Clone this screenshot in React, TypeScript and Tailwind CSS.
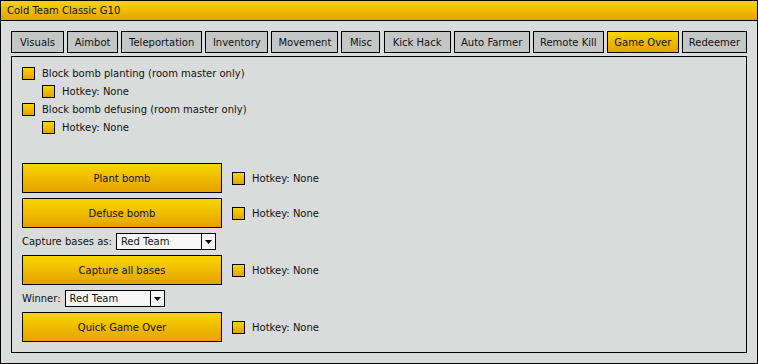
import { useState } from "react";

const tabs = [
  { label: "Visuals", w: "w-[53px]" },
  { label: "Aimbot", w: "w-[51px]" },
  { label: "Teleportation", w: "w-[81px]" },
  { label: "Inventory", w: "w-[63px]" },
  { label: "Movement", w: "w-[67px]" },
  { label: "Misc", w: "w-[39px]" },
  { label: "Kick Hack", w: "w-[67px]" },
  { label: "Auto Farmer", w: "w-[76px]" },
  { label: "Remote Kill", w: "w-[71px]" },
  { label: "Game Over", w: "w-[72px]" },
  { label: "Redeemer", w: "w-[65px]" },
];

const yellow = "bg-gradient-to-b from-[#f8d600] to-[#e5a200]";

// 노란 체크박스 + 라벨
const Check = ({ label }: { label: string }) => (
  <div className="flex items-center gap-[7px] h-[13px] leading-[13px]">
    <div className={`w-[13px] h-[13px] border border-black ${yellow}`} />
    <span>{label}</span>
  </div>
);

const ActionRow = ({ label }: { label: string }) => (
  <div className="flex items-center gap-[10px]">
    <button className={`w-[200px] h-[30px] border border-black ${yellow} text-[10px]`}>
      {label}
    </button>
    <Check label="Hotkey: None" />
  </div>
);

const Select = ({ label, value }: { label: string; value: string }) => (
  <div className="flex items-center gap-[4px] h-[17px]">
    <span>{label}</span>
    <div className="w-[100px] h-[17px] border border-black bg-[#f6f6f6] flex">
      <span className="flex-1 pl-[4px] leading-[15px]">{value}</span>
      <div className="w-[14px] border-l border-black flex items-center justify-center">
        <svg width="7" height="4" viewBox="0 0 7 4">
          <path d="M0 0h7L3.5 4z" fill="#000" />
        </svg>
      </div>
    </div>
  </div>
);

export default function App() {
  const [active, setActive] = useState("Game Over");

  return (
    <div
      className="w-[758px] h-[364px] border border-black bg-[#dadcdb] flex flex-col text-[10px] text-[#111]"
      style={{ fontFamily: '"DejaVu Sans", Verdana, sans-serif' }}
    >
      {/* 타이틀 바 */}
      <div className={`h-[20px] border-b border-black ${yellow} flex items-center pl-[6px] shrink-0`}>
        Cold Team Classic G10
      </div>

      <div className="flex-1 flex flex-col px-[10px] pt-[10px] pb-[10px]">
        {/* 탭 */}
        <div className="flex justify-between">
          {tabs.map((t) => (
            <button
              key={t.label}
              onClick={() => setActive(t.label)}
              className={`${t.w} h-[22px] border border-black flex items-center justify-center ${
                active === t.label ? yellow : "bg-[#c5c7c6]"
              }`}
            >
              {t.label}
            </button>
          ))}
        </div>

        {/* 패널 */}
        <div className="flex-1 mt-[3px] border border-black px-[10px] pt-[10px]">
          <div className="flex flex-col gap-[5px]">
            <Check label="Block bomb planting (room master only)" />
            <div className="ml-[20px]">
              <Check label="Hotkey: None" />
            </div>
            <Check label="Block bomb defusing (room master only)" />
            <div className="ml-[20px]">
              <Check label="Hotkey: None" />
            </div>
          </div>

          <div className="flex flex-col gap-[5px] mt-[29px]">
            <ActionRow label="Plant bomb" />
            <ActionRow label="Defuse bomb" />
            <Select label="Capture bases as:" value="Red Team" />
            <ActionRow label="Capture all bases" />
            <Select label="Winner:" value="Red Team" />
            <ActionRow label="Quick Game Over" />
          </div>
        </div>
      </div>
    </div>
  );
}
